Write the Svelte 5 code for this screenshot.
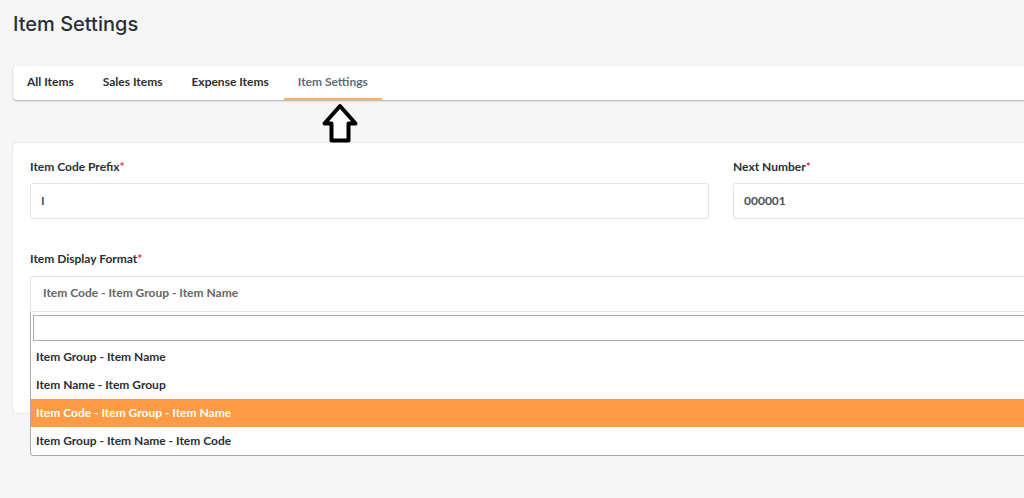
<script lang="ts">
  type Tab = {
    id: string;
    label: string;
  };

  const tabs: Tab[] = [
    { id: 'all', label: 'All Items' },
    { id: 'sales', label: 'Sales Items' },
    { id: 'expense', label: 'Expense Items' },
    { id: 'settings', label: 'Item Settings' }
  ];

  const formats: string[] = [
    'Item Group - Item Name',
    'Item Name - Item Group',
    'Item Code - Item Group - Item Name',
    'Item Group - Item Name - Item Code'
  ];

  let activeTab = $state('settings');
  let prefix = $state('I');
  let nextNumber = $state('000001');
  let displayFormat = $state('Item Code - Item Group - Item Name');
  let search = $state('');
  let isOpen = $state(true);

  let visibleFormats = $derived(
    formats.filter((format) => format.toLowerCase().includes(search.toLowerCase()))
  );

  const selectFormat = (format: string) => {
    displayFormat = format;
    search = '';
    isOpen = false;
  };
</script>

<main>
  <h1>Item Settings</h1>

  <nav class="tabs">
    {#each tabs as tab}
      <a
        class="tab"
        class:active={tab.id === activeTab}
        href={`#${tab.id}`}
        onclick={() => (activeTab = tab.id)}
      >
        {tab.label}
        {#if tab.id === 'settings'}
          <svg class="pointer" width="38" height="40" viewBox="0 0 38 40" aria-hidden="true">
            <path d="M19 3 L34.5 20.5 H27.5 V37.5 H10.5 V20.5 H3.5 Z" />
          </svg>
        {/if}
      </a>
    {/each}
  </nav>

  <form class="card">
    <div class="field">
      <label for="prefix">Item Code Prefix<span class="required">*</span></label>
      <input id="prefix" class="control" type="text" bind:value={prefix} />
    </div>

    <div class="field">
      <label for="next-number">Next Number<span class="required">*</span></label>
      <input id="next-number" class="control flush" type="text" bind:value={nextNumber} />
    </div>

    <div class="field wide">
      <label for="display-format">Item Display Format<span class="required">*</span></label>
      <div class="select">
        <button
          id="display-format"
          class="control flush selected"
          type="button"
          aria-haspopup="listbox"
          aria-expanded={isOpen}
          onclick={() => (isOpen = !isOpen)}
        >
          {displayFormat}
        </button>

        <!-- Searchable list of formats -->
        {#if isOpen}
          <div class="dropdown">
            <div class="search">
              <input type="text" aria-label="Search formats" bind:value={search} />
            </div>
            <div role="listbox" aria-label="Item Display Format">
              {#each visibleFormats as format}
                <button
                  class="option"
                  class:highlighted={format === displayFormat}
                  type="button"
                  role="option"
                  aria-selected={format === displayFormat}
                  onclick={() => selectFormat(format)}
                >
                  {format}
                </button>
              {/each}
            </div>
          </div>
        {/if}
      </div>
    </div>
  </form>
</main>

<style>
  :global(body) {
    background: #f6f6f6;
  }

  main {
    box-sizing: border-box;
    min-height: 100vh;
    padding: 8px 0 40px 13px;
    font-family: Lato, 'Liberation Sans', sans-serif;
    font-size: 12px;
    font-weight: 700;
    line-height: 16px;
    color: #2b2f33;
  }

  h1 {
    margin: 0 0 26px;
    font-family: Inter, 'Liberation Sans', sans-serif;
    font-size: 20px;
    font-weight: 500;
    line-height: 32px;
  }

  .tabs {
    display: flex;
    gap: 1px;
    margin-bottom: 43px;
    background: #fff;
    border-radius: 4px 0 0 4px;
    box-shadow: 0 1px 2px rgba(0, 0, 0, 0.3);
  }

  .tab {
    position: relative;
    padding: 8px 14px;
    border-bottom: 2px solid transparent;
    color: #2b2f33;
    text-decoration: none;
  }

  .tab.active {
    border-bottom-color: #f7b264;
    color: #5f6b76;
  }

  .pointer {
    position: absolute;
    top: 37px;
    left: 50%;
    transform: translateX(-12px);
    fill: #fff;
    stroke: #000;
    stroke-width: 4;
    stroke-linejoin: round;
  }

  .card {
    display: grid;
    grid-template-columns: 7fr 3fr;
    gap: 32px 24px;
    padding: 16px 0 101px 17px;
    background: #fff;
    border-radius: 4px 0 0 4px;
    box-shadow: 0 0 2px rgba(0, 0, 0, 0.2);
  }

  .field {
    display: flex;
    flex-direction: column;
    gap: 8px;
    min-width: 0;
  }

  .wide {
    grid-column: 1 / -1;
    gap: 9px;
  }

  .required {
    color: #e3342f;
  }

  .control {
    box-sizing: border-box;
    width: 100%;
    height: 36px;
    padding: 0 10px 2px;
    border: 1px solid #e4e4e4;
    border-radius: 3px;
    background: #fff;
    font: inherit;
    color: #495057;
    text-align: left;
  }

  .control.flush {
    border-right: 0;
    border-radius: 3px 0 0 3px;
  }

  .select {
    position: relative;
  }

  .control.selected {
    display: block;
    padding: 0 12px 2px;
    border-bottom-left-radius: 0;
    color: #666;
  }

  .dropdown {
    position: absolute;
    top: 100%;
    left: 0;
    right: 0;
    border: 1px solid #aaa;
    border-width: 0 0 1px 1px;
    border-radius: 0 0 0 4px;
    background: #fff;
  }

  .search {
    padding: 3px 0 2px 2px;
  }

  .search input {
    box-sizing: border-box;
    display: block;
    width: 100%;
    height: 26px;
    padding: 4px;
    border: 1px solid #aaa;
    border-right: 0;
    font: inherit;
  }

  .option {
    display: block;
    width: 100%;
    padding: 6px 5px;
    border: 0;
    background: #fff;
    font: inherit;
    color: #2b2f33;
    text-align: left;
  }

  .option:last-child {
    border-bottom-left-radius: 4px;
  }

  .option.highlighted {
    background: #ff9b44;
    color: #fff;
  }
</style>
